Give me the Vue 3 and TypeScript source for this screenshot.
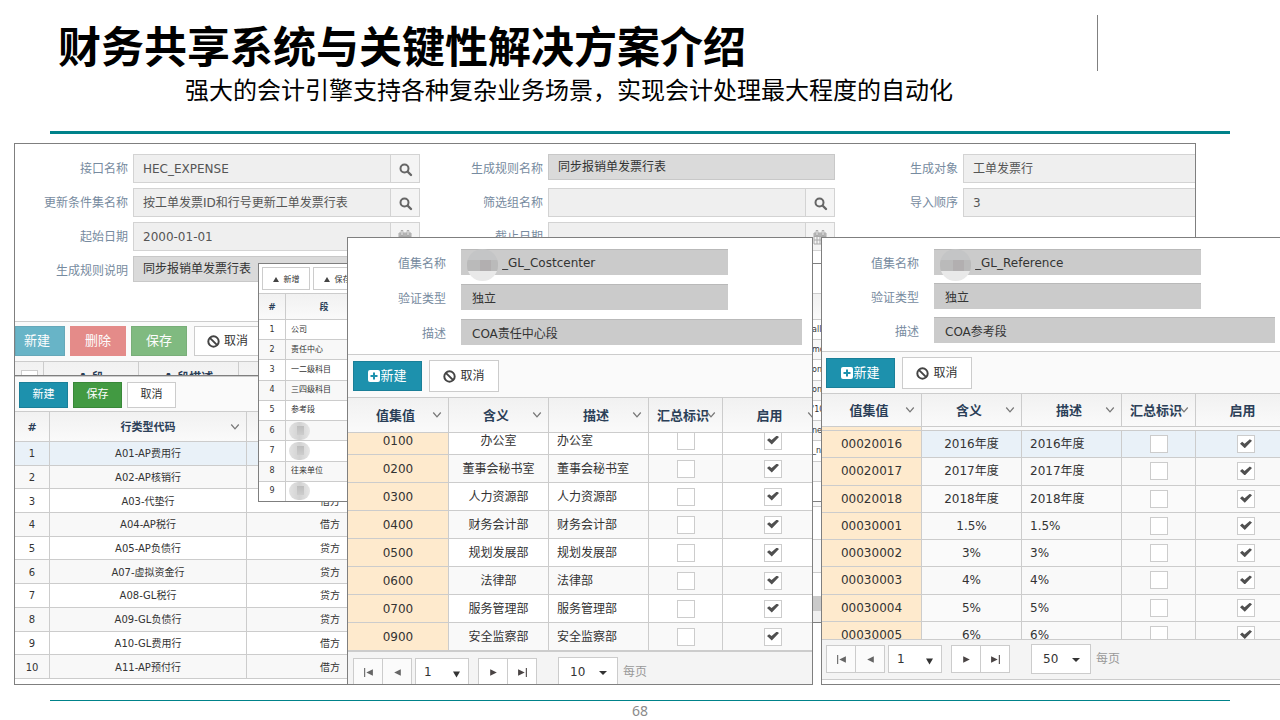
<script setup lang="ts">
interface ValueRow {
  code: string
  name: string
  on: boolean
}
interface ValueSet {
  id: string
  suffix: string
  desc: string
  size: string
  rows: ValueRow[]
}

const toRows = (pairs: [string, string][]): ValueRow[] =>
  pairs.map(([code, name]) => ({ code, name, on: true }))

const valueSets: ValueSet[] = [
  {
    id: 'cost',
    suffix: '_GL_Costcenter',
    desc: 'COA责任中心段',
    size: '10',
    rows: toRows([
      ['0100', '办公室'],
      ['0200', '董事会秘书室'],
      ['0300', '人力资源部'],
      ['0400', '财务会计部'],
      ['0500', '规划发展部'],
      ['0600', '法律部'],
      ['0700', '服务管理部'],
      ['0900', '安全监察部'],
    ]),
  },
  {
    id: 'ref',
    suffix: '_GL_Reference',
    desc: 'COA参考段',
    size: '50',
    rows: toRows([
      ['00020016', '2016年度'],
      ['00020017', '2017年度'],
      ['00020018', '2018年度'],
      ['00030001', '1.5%'],
      ['00030002', '3%'],
      ['00030003', '4%'],
      ['00030004', '5%'],
      ['00030005', '6%'],
    ]),
  },
]

const headings = ['值集值', '含义', '描述', '汇总标识', '启用']

const ruleColumns = [
  [
    { id: 'if', label: '接口名称', value: 'HEC_EXPENSE', kind: 'search' },
    { id: 'cond', label: '更新条件集名称', value: '按工单发票ID和行号更新工单发票行表', kind: 'search' },
    { id: 'start', label: '起始日期', value: '2000-01-01', kind: 'date' },
    { id: 'memo', label: '生成规则说明', value: '同步报销单发票行表', kind: 'locked' },
  ],
  [
    { id: 'rule', label: '生成规则名称', value: '同步报销单发票行表', kind: 'locked' },
    { id: 'filter', label: '筛选组名称', value: '', kind: 'search' },
    { id: 'end', label: '截止日期', value: '', kind: 'date' },
  ],
  [
    { id: 'target', label: '生成对象', value: '工单发票行', kind: 'text' },
    { id: 'order', label: '导入顺序', value: '3', kind: 'text' },
  ],
]

const lineTypes = [
  ['A01-AP费用行', '借方'],
  ['A02-AP核销行', '借方'],
  ['A03-代垫行', '借方'],
  ['A04-AP税行', '借方'],
  ['A05-AP负债行', '贷方'],
  ['A07-虚拟资金行', '贷方'],
  ['A08-GL税行', '贷方'],
  ['A09-GL负债行', '贷方'],
  ['A10-GL费用行', '借方'],
  ['A11-AP预付行', '借方'],
]

const segments = [
  ['公司', 'all'],
  ['责任中心', 'mo'],
  ['一二级科目', 'on'],
  ['三四级科目', 'on_'],
  ['参考段', "'10"],
  ['', 'ne'],
  ['', '_n'],
  ['往来单位', ''],
  ['', ''],
]
</script>

<template>
  <main class="slide">
    <header class="head">
      <div class="titles">
        <h1>财务共享系统与关键性解决方案介绍</h1>
        <p>强大的会计引擎支持各种复杂业务场景，实现会计处理最大程度的自动化</p>
      </div>
      <div class="divider"></div>
    </header>
    <div class="rule"></div>

    <div class="stage">
      <section class="win rules">
        <form class="rule-form">
          <div v-for="(col, c) in ruleColumns" :key="c" class="rule-col">
            <div v-for="f in col" :key="f.id" class="rule-row">
              <label :for="f.id">{{ f.label }}</label>
              <div class="box" :class="f.kind">
                <input :id="f.id" :value="f.value" readonly />
                <button v-if="f.kind === 'search'" type="button" aria-label="查找">
                  <svg width="15" height="15" viewBox="0 0 15 15">
                    <circle cx="6.5" cy="6.5" r="4" fill="none" stroke="#666" stroke-width="2" />
                    <path d="M10 10l3 3" stroke="#666" stroke-width="2.4" stroke-linecap="round" />
                  </svg>
                </button>
                <button v-if="f.kind === 'date'" type="button" aria-label="选择日期">
                  <svg width="14" height="15" viewBox="0 0 14 15">
                    <path d="M1 3h12v11H1zM1 6.5h12M1 10h12M4 6v8M7 6v8M10 6v8" fill="none" stroke="#aaa" />
                    <path d="M1 3h12v3H1z" fill="#b4b4b4" />
                    <path d="M4 1v4M10 1v4" stroke="#aaa" stroke-width="2.6" stroke-linecap="round" />
                    <path d="M4 1v4M10 1v4" stroke="#eee" />
                  </svg>
                </button>
              </div>
            </div>
          </div>
        </form>
        <div class="rule-tools">
          <button type="button" class="faded blue first">新建</button>
          <button type="button" class="faded red">删除</button>
          <button type="button" class="faded green">保存</button>
          <button type="button" class="plain">
            <svg class="ban" viewBox="0 0 12 12"><circle cx="6" cy="6" r="4.8" /><path d="M2.6 2.6l6.8 6.8" /></svg>取消
          </button>
        </div>
        <table class="rule-table">
          <thead>
            <tr>
              <th class="pick"><input type="checkbox" aria-label="全选" /></th>
              <th class="seg">A 段</th>
              <th class="segd">A 段描述</th>
              <th></th>
            </tr>
          </thead>
          <tbody>
            <tr v-for="n in 6" :key="n"><td></td><td></td><td></td><td></td></tr>
          </tbody>
        </table>
        <div class="hscroll"></div>
      </section>

      <section class="win types">
        <div class="type-tools">
          <button type="button" class="blue">新建</button>
          <button type="button" class="green">保存</button>
          <button type="button" class="plain">取消</button>
        </div>
        <table>
          <thead>
            <tr>
              <th class="num">#</th>
              <th class="code">行类型代码
                <svg class="chev" viewBox="0 0 8 6"><path d="M1 1l3 3.5L7 1" /></svg>
              </th>
              <th></th>
            </tr>
          </thead>
          <tbody>
            <tr v-for="(t, i) in lineTypes" :key="t[0]">
              <td>{{ i + 1 }}</td>
              <td>{{ t[0] }}</td>
              <td>{{ t[1] }}</td>
            </tr>
          </tbody>
        </table>
      </section>

      <section class="win segs">
        <div class="seg-tools">
          <button type="button" class="plain"><i></i>新增</button>
          <button type="button" class="plain"><i></i>保存</button>
        </div>
        <table>
          <thead>
            <tr><th class="num">#</th><th class="name">段</th><th></th><th class="tail"></th></tr>
          </thead>
          <tbody>
            <tr v-for="(s, i) in segments" :key="i">
              <td class="num">{{ i + 1 }}</td>
              <td><span v-if="s[0]">{{ s[0] }}</span><span v-else class="blot"></span></td>
              <td></td>
              <td>{{ s[1] }}</td>
            </tr>
          </tbody>
        </table>
      </section>

      <section v-for="w in valueSets" :key="w.id" class="win values" :class="w.id">
        <form class="value-form">
          <div class="value-row">
            <label :for="w.id + '-name'">值集名称</label>
            <div class="masked">
              <input :id="w.id + '-name'" :value="w.suffix" readonly />
              <span class="mask"></span>
            </div>
          </div>
          <div class="value-row">
            <label :for="w.id + '-type'">验证类型</label>
            <input :id="w.id + '-type'" value="独立" readonly />
          </div>
          <div class="value-row">
            <label :for="w.id + '-desc'">描述</label>
            <input :id="w.id + '-desc'" class="wide" :value="w.desc" readonly />
          </div>
        </form>
        <div class="value-tools">
          <button type="button" class="blue">
            <svg class="plus" viewBox="0 0 12 12"><rect width="12" height="12" rx="2" fill="#fff" /><path d="M6 2.5v7M2.5 6h7" stroke="#1d91ad" stroke-width="2" /></svg>新建
          </button>
          <button type="button" class="plain">
            <svg class="ban" viewBox="0 0 12 12"><circle cx="6" cy="6" r="4.8" /><path d="M2.6 2.6l6.8 6.8" /></svg>取消
          </button>
        </div>
        <table class="value-head">
          <colgroup><col class="c1" /><col class="c2" /><col class="c2" /><col class="c4" /><col class="c5" /></colgroup>
          <thead>
            <tr>
              <th v-for="h in headings" :key="h">{{ h }}
                <svg class="chev" viewBox="0 0 8 6"><path d="M1 1l3 3.5L7 1" /></svg>
              </th>
            </tr>
          </thead>
        </table>
        <div class="value-body">
          <table>
            <colgroup><col class="c1" /><col class="c2" /><col class="c2" /><col class="c4" /><col class="c5" /></colgroup>
            <tbody>
              <tr v-for="r in w.rows" :key="r.code">
                <td class="key">{{ r.code }}</td>
                <td>{{ r.name }}</td>
                <td class="left">{{ r.name }}</td>
                <td><input type="checkbox" :aria-label="r.name + ' 汇总标识'" /></td>
                <td><input v-model="r.on" type="checkbox" :aria-label="r.name + ' 启用'" /></td>
              </tr>
            </tbody>
          </table>
        </div>
        <div class="pager">
          <div class="pair off">
            <button type="button" aria-label="首页"><svg viewBox="0 0 10 10"><path d="M1 1h1v8H1zM9 2v6L3 5z" /></svg></button>
            <button type="button" aria-label="上一页"><svg viewBox="0 0 10 10"><path d="M8 2v6L2 5z" /></svg></button>
          </div>
          <span class="pick-page">
            <select aria-label="页码"><option>1</option></select>
            <svg viewBox="0 0 8 8"><path d="M0 1h8L4 8z" /></svg>
          </span>
          <div class="pair">
            <button type="button" aria-label="下一页"><svg viewBox="0 0 10 10"><path d="M2 2v6l6-3z" /></svg></button>
            <button type="button" aria-label="末页"><svg viewBox="0 0 10 10"><path d="M8 1h1v8H8zM1 2v6l6-3z" /></svg></button>
          </div>
          <span class="pick-size">
            <select :id="w.id + '-size'"><option>{{ w.size }}</option></select>
            <svg viewBox="0 0 8 8"><path d="M0 2h8L4 6z" /></svg>
          </span>
          <label :for="w.id + '-size'">每页</label>
        </div>
      </section>
    </div>

    <footer class="foot"><span>68</span></footer>
  </main>
</template>

<style>
body {
  margin: 0;
  background: #fff;
}
</style>

<style scoped>
.slide,
.slide * {
  box-sizing: border-box;
}
.slide {
  min-height: 100vh;
  overflow: hidden;
  background: #fff;
  color: #333;
  font: 12px/16px "DejaVu Sans", "Noto Sans CJK SC", sans-serif;
}
button,
input,
select {
  font: inherit;
  color: inherit;
  margin: 0;
}
button {
  display: inline-flex;
  align-items: center;
  justify-content: center;
  padding: 0;
  border: 1px solid transparent;
  white-space: nowrap;
}

/* Slide heading */
.head {
  display: flex;
  justify-content: space-between;
  height: 131px;
  padding: 15px 182px 0 58px;
  font-family: "Noto Sans CJK SC", sans-serif;
  color: #000;
}
h1 {
  margin: 0;
  font-size: 43px;
  line-height: 58px;
  font-weight: 700;
  white-space: nowrap;
}
.titles p {
  margin: 0 0 0 127px;
  font-size: 24px;
  line-height: 32px;
  white-space: nowrap;
}
.divider {
  width: 1px;
  height: 56px;
  background: #808080;
}
.rule {
  height: 3px;
  margin: 0 50px 9px;
  background: #00828a;
}

/* Overlapping windows */
.stage {
  position: relative;
  height: 542px;
  overflow: hidden;
}
.win {
  position: absolute;
  overflow: hidden;
  border: 1px solid #7f7f7f;
  background: #fff;
}
.rules {
  left: 14px;
  top: 0;
  width: 1182px;
  height: 480px;
}
.types {
  left: 14px;
  top: 232px;
  width: 402px;
  height: 310px;
}
.segs {
  left: 258px;
  top: 120px;
  width: 640px;
  height: 239px;
}
.values {
  top: 94px;
  height: 448px;
  display: flex;
  flex-direction: column;
}
.cost {
  --lead: 101px;
  --gap: 9px;
  --tools: 43px;
  --head: 36px;
  --inset: 5px;
  left: 347px;
  width: 466px;
}
.ref {
  --lead: 100px;
  --gap: 8px;
  --tools: 42px;
  --head: 34px;
  --inset: 4px;
  left: 821px;
  right: -20px;
}

.blue {
  background: #1d91ad;
  border-color: #1a7f98;
  color: #fff;
}
.green {
  background: #429a42;
  border-color: #388738;
  color: #fff;
}
.red {
  background: #d9534f;
  color: #fff;
}
.plain {
  background: #fff;
  border-color: #ccc;
  color: #333;
}
.ban {
  width: 13px;
  height: 13px;
  margin-right: 4px;
  fill: none;
  stroke: #444;
  stroke-width: 1.8;
}
table {
  border-collapse: separate;
  border-spacing: 0;
  table-layout: fixed;
}
th,
td {
  padding: 0;
  border-right: 1px solid #ccc;
  border-bottom: 1px solid #ccc;
  text-align: center;
  white-space: nowrap;
}
th {
  position: relative;
  background: linear-gradient(#f1f1f1, #fafafa);
  color: #2b3f58;
  font-weight: 700;
}
.chev {
  position: absolute;
  right: 6px;
  top: 50%;
  width: 10px;
  height: 8px;
  margin-top: -4px;
  fill: none;
  stroke: #777;
}

/* Generation rule window */
.rule-form {
  display: flex;
  height: 177px;
  padding-top: 10px;
}
.rule-col {
  display: flex;
  flex-direction: column;
  flex: none;
  gap: 5px;
  width: 415px;
}
.rule-col:first-child {
  width: 405px;
}
.rule-row {
  display: flex;
  justify-content: flex-end;
  gap: 5px;
  height: 29px;
}
.rule-row label {
  line-height: 31px;
  color: #778ba0;
}
.box {
  display: flex;
  width: 287px;
  height: 29px;
  border: 1px solid #d3d3d3;
  background: #efefef;
}
.box input {
  flex: 1;
  min-width: 0;
  padding: 0 9px;
  border: 0;
  background: transparent;
  color: #555;
  outline: 0;
}
.box.locked {
  height: 26px;
  background: #dadada;
  border-color: #c8c8c8;
}
.box.locked input {
  color: #333;
}
.box button {
  width: 29px;
  padding-top: 2px;
  border: 0;
  border-left: 1px solid #d3d3d3;
  background: #f4f4f4;
}
.rule-tools {
  display: flex;
  gap: 5px;
  height: 40px;
  padding-top: 4px;
  border-top: 1px solid #ccc;
  background: #fafafa;
}
.rule-tools button {
  width: 56px;
  height: 30px;
  font-size: 13px;
}
.rule-tools .faded {
  opacity: 0.66;
}
.rule-tools .first {
  width: 50px;
  padding-right: 6px;
}
.rule-tools .plain {
  width: 70px;
  margin-left: 2px;
  padding-right: 3px;
  font-size: 12px;
}
.rule-table {
  width: 100%;
  border-top: 1px solid #ccc;
}
.rule-table th {
  height: 46px;
  padding-top: 8px;
  vertical-align: top;
}
.rule-table td {
  height: 33px;
}
.rule-table tr:nth-child(odd) td {
  background: #f9f9f9;
}
.pick {
  width: 29px;
}
.seg {
  width: 95px;
}
.segd {
  width: 100px;
}
.pick input {
  appearance: none;
  width: 17px;
  height: 17px;
  border: 1px solid #ccc;
  background: #fff;
}
.hscroll {
  position: absolute;
  left: 0;
  right: 0;
  bottom: 0;
  height: 26px;
  border-bottom: 11px solid #f0f0f0;
  background: #cacaca;
}

/* Line type window */
.type-tools {
  display: flex;
  gap: 5px;
  height: 36px;
  padding: 5px 4px 0;
  border-top: 1px solid #ccc;
  border-bottom: 1px solid #ccc;
  background: #fafafa;
}
.type-tools button {
  width: 49px;
  height: 26px;
  font-size: 11px;
}
.types table {
  width: 399px;
  height: 267px;
  font-size: 10px;
  line-height: 14px;
}
.types th {
  height: 30px;
  padding-top: 2px;
  font-size: 11px;
}
.types td {
  padding-top: 2px;
}
.types .num {
  width: 35px;
}
.types .code {
  width: 197px;
}
.types tbody tr:nth-child(even) td {
  background: #f8f8f8;
}
.types tbody tr:first-child td {
  background: #e9f1f8;
}

/* Segment window */
.seg-tools {
  display: flex;
  gap: 3px;
  height: 30px;
  padding: 3px 3px 0;
  border-bottom: 1px solid #ccc;
}
.seg-tools button {
  width: 48px;
  height: 23px;
  padding-top: 2px;
  font-size: 8px;
}
.seg-tools i {
  margin-right: 5px;
  border: 3px solid transparent;
  border-top: 0;
  border-bottom: 5px solid #444;
}
.segs table {
  width: 100%;
  height: 208px;
  font-size: 8px;
  line-height: 12px;
}
.segs th {
  height: 26px;
  font-size: 9px;
}
.segs td {
  padding-left: 5px;
  text-align: left;
}
.segs td.num {
  padding: 0;
  text-align: center;
}
.segs .num {
  width: 27px;
}
.segs .name {
  width: 77px;
}
.segs .tail {
  width: 90px;
}
.segs tr:nth-child(even) td {
  background: #f8f8f8;
}
.blot {
  display: block;
  width: 21px;
  height: 18px;
  margin: -3px 0 -3px -2px;
  border-radius: 9px;
  background:
    linear-gradient(#bdbdbd, #cdcdcd) 8px 4px / 7px 9px no-repeat,
    linear-gradient(90deg, #e2e2e2, #d2d2d2, #e6e6e6);
}

/* Value set windows */
.value-form {
  display: flex;
  flex: none;
  flex-direction: column;
  gap: var(--gap);
  padding: 11px 0 var(--gap);
}
.value-row {
  display: flex;
  gap: 15px;
}
.value-row label {
  width: calc(var(--lead) - 3px);
  padding-top: 5px;
  line-height: 21px;
  text-align: right;
  color: #778ba0;
}
.value-row input {
  width: 267px;
  height: 26px;
  padding: 0 11px;
  border: 0;
  border-top: 1px solid #b9b9b9;
  background: #cbcbcb;
  outline: 0;
}
.value-row .wide {
  width: 341px;
}
.masked {
  position: relative;
}
.masked .mask + input,
.masked input {
  padding-left: 41px;
}
.mask {
  position: absolute;
  left: 6px;
  top: 0;
  width: 31px;
  height: 32px;
  border-radius: 16px;
  background:
    linear-gradient(#b2afb0, #b2afb0) 13px 11px / 11px 11px no-repeat,
    linear-gradient(#bababa, #bababa) 0 11px / 31px 11px no-repeat,
    linear-gradient(#c4c5c6 60%, #e9e9e9 60%);
}
.value-tools {
  display: flex;
  flex: none;
  align-items: flex-start;
  gap: 7px;
  height: var(--tools);
  padding: 5px var(--inset) 0;
  border-top: 1px solid #ccc;
  background: #fafafa;
}
.value-tools button {
  width: 70px;
  height: 32px;
}
.value-tools .blue {
  width: 69px;
  height: 30px;
  margin-top: 1px;
  font-size: 13px;
}
.plus {
  width: 12px;
  height: 12px;
}
.values table {
  flex: none;
  width: calc(var(--lead) + 375px);
}
.c1 {
  width: var(--lead);
}
.c2 {
  width: 100px;
}
.c4 {
  width: 74px;
}
.c5 {
  width: 101px;
}
.value-head th {
  height: var(--head);
  padding: 1px 5px 0 0;
  border-top: 1px solid #ccc;
  font-size: 13px;
}
.value-head th:last-child {
  padding-right: 7px;
}
.value-body {
  display: flex;
  flex: none;
  flex-direction: column;
  overflow: hidden;
}
.cost .value-body {
  justify-content: flex-end;
  height: 218px;
}
.cost .value-body table {
  height: 224px;
}
.ref .value-body {
  height: 212px;
  padding-top: 3px;
  background: linear-gradient(90deg, #feeacd 99px, #ccc 99px, #ccc 100px, #fafafa 100px);
}
.ref .value-body table {
  height: 219px;
  border-top: 1px solid #ccc;
}
.value-body tr:nth-child(even) td {
  background: #f9f9f9;
}
.ref .value-body tr:first-child td {
  background: #e9f1f8;
}
.value-body tr td.key,
.ref .value-body tr:first-child td.key {
  background: #feeacd;
}
.value-body .left {
  padding-left: 8px;
  text-align: left;
}
.value-body input {
  appearance: none;
  display: block;
  width: 18px;
  height: 18px;
  margin: 0 auto;
  border: 1px solid #ccc;
  background: #fff;
}
.value-body input:checked::before {
  content: "";
  display: block;
  width: 12px;
  height: 9px;
  margin: 3px 2px;
  background: #505050;
  clip-path: polygon(0 50%, 18% 30%, 38% 50%, 82% 0, 100% 18%, 40% 100%);
}
.pager {
  display: flex;
  flex: none;
  align-items: flex-start;
  height: 41px;
  padding: 5px var(--inset) 0;
  border-top: 1px solid #ccc;
  border-bottom: 1px solid #ccc;
  background: #f4f4f4;
}
.pair {
  display: flex;
  width: 59px;
  height: 28px;
  border: 1px solid #ccc;
  background: #fff;
}
.pair button {
  flex: 1;
  border: 0;
  background: transparent;
}
.pair button + button {
  border-left: 1px solid #ccc;
}
.pair svg {
  width: 11px;
  height: 11px;
  fill: #4a4444;
}
.pair.off {
  background: #fbfbfb;
}
.pair.off svg {
  fill: #666;
}
.pick-page,
.pick-size {
  position: relative;
  display: flex;
}
.pick-page {
  margin: 0 9px 0 3px;
}
.pick-size {
  margin: -1px 5px 0 21px;
}
.pager select {
  appearance: none;
  width: 54px;
  height: 28px;
  padding: 0 8px;
  border: 1px solid #ccc;
  border-radius: 0;
  background: #fff;
}
.pick-size select {
  width: 60px;
  height: 30px;
  padding: 0 11px;
}
.pick-page svg,
.pick-size svg {
  position: absolute;
  right: 9px;
  top: 12px;
  width: 7px;
  height: 8px;
  fill: #333;
}
.pick-size svg {
  right: 11px;
  width: 8px;
}
.cost .pager {
  padding-top: 6px;
}
.pager label {
  line-height: 28px;
  color: #999;
}

.foot {
  margin: 15px 50px 0;
  border-top: 1px solid #00828a;
  color: #8a8a8a;
  font: 14px/20px "Noto Sans", sans-serif;
  text-align: center;
}
</style>
